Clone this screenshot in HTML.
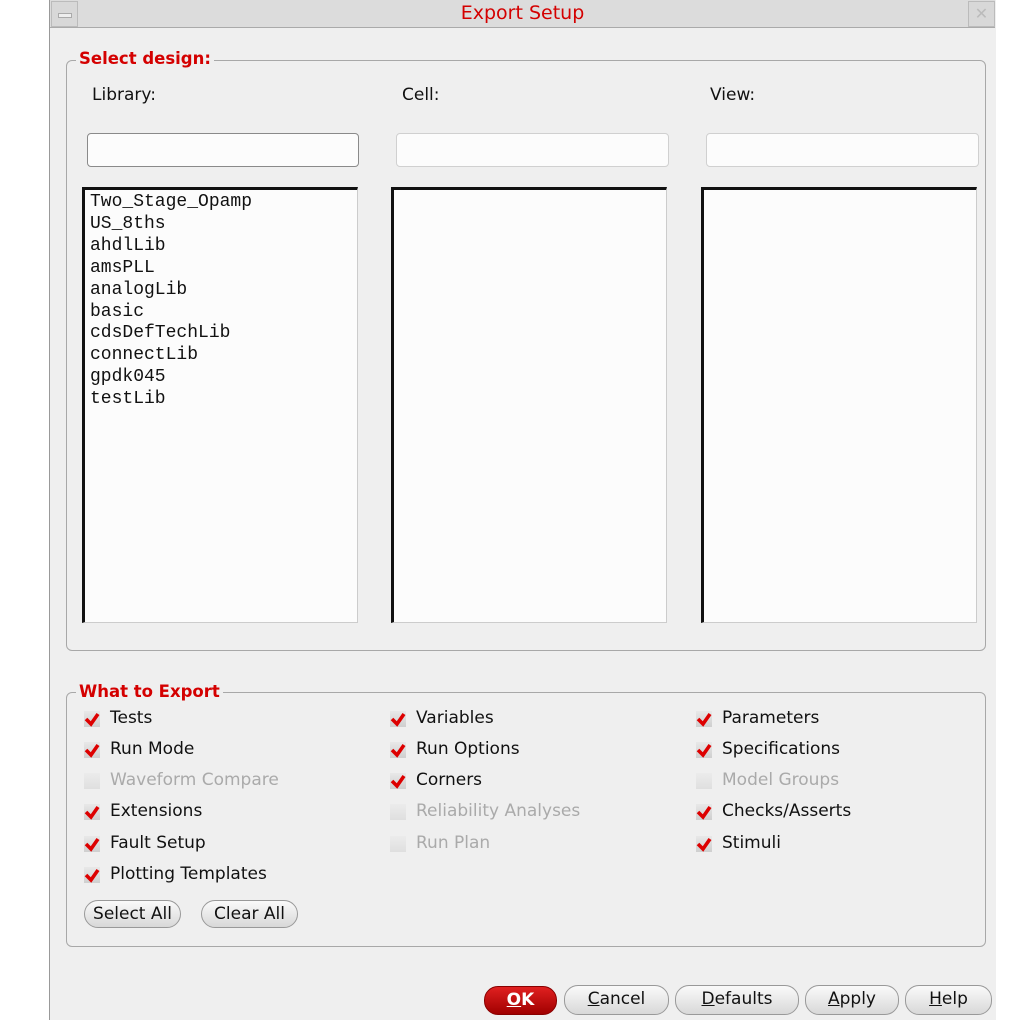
<!DOCTYPE html>
<html><head><style>
body{margin:0;width:1013px;height:1020px;background:#fff;position:relative;overflow:hidden;font-family:"DejaVu Sans","Liberation Sans",sans-serif;font-size:17px;color:#111}
.a{position:absolute}
#win{left:49px;top:0;width:946px;height:1020px;background:#efefef;border-left:1px solid #999}
#title{left:50px;top:0;width:945px;height:27px;background:#dcdcdc;border-bottom:1px solid #aaa}
.grp{border:1px solid #a8a8a8;border-radius:6px}
.leg{background:#efefef;color:#d40000;font-weight:bold;padding:0 3px;font-size:16.5px}
.inp{background:#fcfcfc;border:1px solid #8a8a8a;border-radius:4px;height:32px}
.inp2{border-color:#d0d0d0}
.lst{background:#fcfcfc;border-top:3px solid #111;border-left:3px solid #111;border-right:1px solid #ccc;border-bottom:1px solid #ccc}
.lst div{font-family:"Liberation Mono",monospace;font-size:18px;line-height:21.9px;padding-left:5px;padding-top:2px}
.cb{width:16px;height:16px;background:linear-gradient(#e8e8e8,#cfcfcf);}
.cb svg{position:absolute;left:0px;top:0px}
.lab{font-size:17px}
.dis{color:#aaa}
.btn{border:1px solid #999;border-radius:14px;background:linear-gradient(#fafafa,#d8d8d8);text-align:center;font-size:17px;line-height:27px;box-sizing:border-box}
u{text-decoration:underline}
</style></head><body>
<div class="a" id="win"></div>
<div class="a" id="title"></div>
<div class="a" style="left:51px;top:1px;width:25px;height:24px;border:1px solid #bbb;background:#d8d8d8"><div class="a" style="left:6px;top:11px;width:12px;height:3px;background:#eee;border:1px solid #aaa"></div></div>
<div class="a" style="left:968px;top:1px;width:25px;height:24px;border:1px solid #bbb;background:#d8d8d8;color:#bbb;font-size:16px;text-align:center;line-height:24px">✕</div>
<div class="a" style="left:0;top:2px;width:1045px;text-align:center;color:#d40000;font-size:19px">Export Setup</div>

<div class="a grp" style="left:66px;top:60px;width:918px;height:589px"></div>
<div class="a leg" style="left:76px;top:49px">Select design:</div>
<div class="a lab" style="left:92px;top:85px">Library:</div>
<div class="a lab" style="left:402px;top:85px">Cell:</div>
<div class="a lab" style="left:710px;top:85px">View:</div>
<div class="a inp" style="left:87px;top:133px;width:270px"></div>
<div class="a inp inp2" style="left:396px;top:133px;width:271px"></div>
<div class="a inp inp2" style="left:706px;top:133px;width:271px"></div>
<div class="a lst" style="left:82px;top:187px;width:272px;height:432px"><div>Two_Stage_Opamp<br>US_8ths<br>ahdlLib<br>amsPLL<br>analogLib<br>basic<br>cdsDefTechLib<br>connectLib<br>gpdk045<br>testLib</div></div>
<div class="a lst" style="left:391px;top:187px;width:272px;height:432px"></div>
<div class="a lst" style="left:701px;top:187px;width:272px;height:432px"></div>

<div class="a grp" style="left:66px;top:692px;width:918px;height:253px"></div>
<div class="a leg" style="left:76px;top:682px">What to Export</div>

<svg width="0" height="0" style="position:absolute"><defs><symbol id="ck" viewBox="0 0 16 16"><path d="M2 8 L7 13 L14 3" stroke="#d00" stroke-width="3.6" fill="none"/></symbol></defs></svg>

<div class="a cb" style="left:84px;top:711px"><svg width="16" height="16"><use href="#ck"/></svg></div><div class="a lab" style="left:110px;top:708px">Tests</div>
<div class="a cb" style="left:84px;top:742px"><svg width="16" height="16"><use href="#ck"/></svg></div><div class="a lab" style="left:110px;top:739px">Run Mode</div>
<div class="a cb" style="left:84px;top:773px;opacity:.5"></div><div class="a lab dis" style="left:110px;top:770px">Waveform Compare</div>
<div class="a cb" style="left:84px;top:804px"><svg width="16" height="16"><use href="#ck"/></svg></div><div class="a lab" style="left:110px;top:801px">Extensions</div>
<div class="a cb" style="left:84px;top:836px"><svg width="16" height="16"><use href="#ck"/></svg></div><div class="a lab" style="left:110px;top:833px">Fault Setup</div>
<div class="a cb" style="left:84px;top:867px"><svg width="16" height="16"><use href="#ck"/></svg></div><div class="a lab" style="left:110px;top:864px">Plotting Templates</div>

<div class="a cb" style="left:390px;top:711px"><svg width="16" height="16"><use href="#ck"/></svg></div><div class="a lab" style="left:416px;top:708px">Variables</div>
<div class="a cb" style="left:390px;top:742px"><svg width="16" height="16"><use href="#ck"/></svg></div><div class="a lab" style="left:416px;top:739px">Run Options</div>
<div class="a cb" style="left:390px;top:773px"><svg width="16" height="16"><use href="#ck"/></svg></div><div class="a lab" style="left:416px;top:770px">Corners</div>
<div class="a cb" style="left:390px;top:804px;opacity:.5"></div><div class="a lab dis" style="left:416px;top:801px">Reliability Analyses</div>
<div class="a cb" style="left:390px;top:836px;opacity:.5"></div><div class="a lab dis" style="left:416px;top:833px">Run Plan</div>

<div class="a cb" style="left:696px;top:711px"><svg width="16" height="16"><use href="#ck"/></svg></div><div class="a lab" style="left:722px;top:708px">Parameters</div>
<div class="a cb" style="left:696px;top:742px"><svg width="16" height="16"><use href="#ck"/></svg></div><div class="a lab" style="left:722px;top:739px">Specifications</div>
<div class="a cb" style="left:696px;top:773px;opacity:.5"></div><div class="a lab dis" style="left:722px;top:770px">Model Groups</div>
<div class="a cb" style="left:696px;top:804px"><svg width="16" height="16"><use href="#ck"/></svg></div><div class="a lab" style="left:722px;top:801px">Checks/Asserts</div>
<div class="a cb" style="left:696px;top:836px"><svg width="16" height="16"><use href="#ck"/></svg></div><div class="a lab" style="left:722px;top:833px">Stimuli</div>

<div class="a btn" style="left:84px;top:900px;width:97px;height:28px">Select All</div>
<div class="a btn" style="left:201px;top:900px;width:97px;height:28px">Clear All</div>

<div class="a btn" style="left:484px;top:986px;width:73px;height:29px;background:linear-gradient(#e02020,#a00000);border-color:#800;color:#fff;font-weight:bold"><u>O</u>K</div>
<div class="a btn" style="left:564px;top:985px;width:105px;height:30px"><u>C</u>ancel</div>
<div class="a btn" style="left:675px;top:985px;width:124px;height:30px"><u>D</u>efaults</div>
<div class="a btn" style="left:805px;top:985px;width:94px;height:30px"><u>A</u>pply</div>
<div class="a btn" style="left:905px;top:985px;width:87px;height:30px"><u>H</u>elp</div>
</body></html>
